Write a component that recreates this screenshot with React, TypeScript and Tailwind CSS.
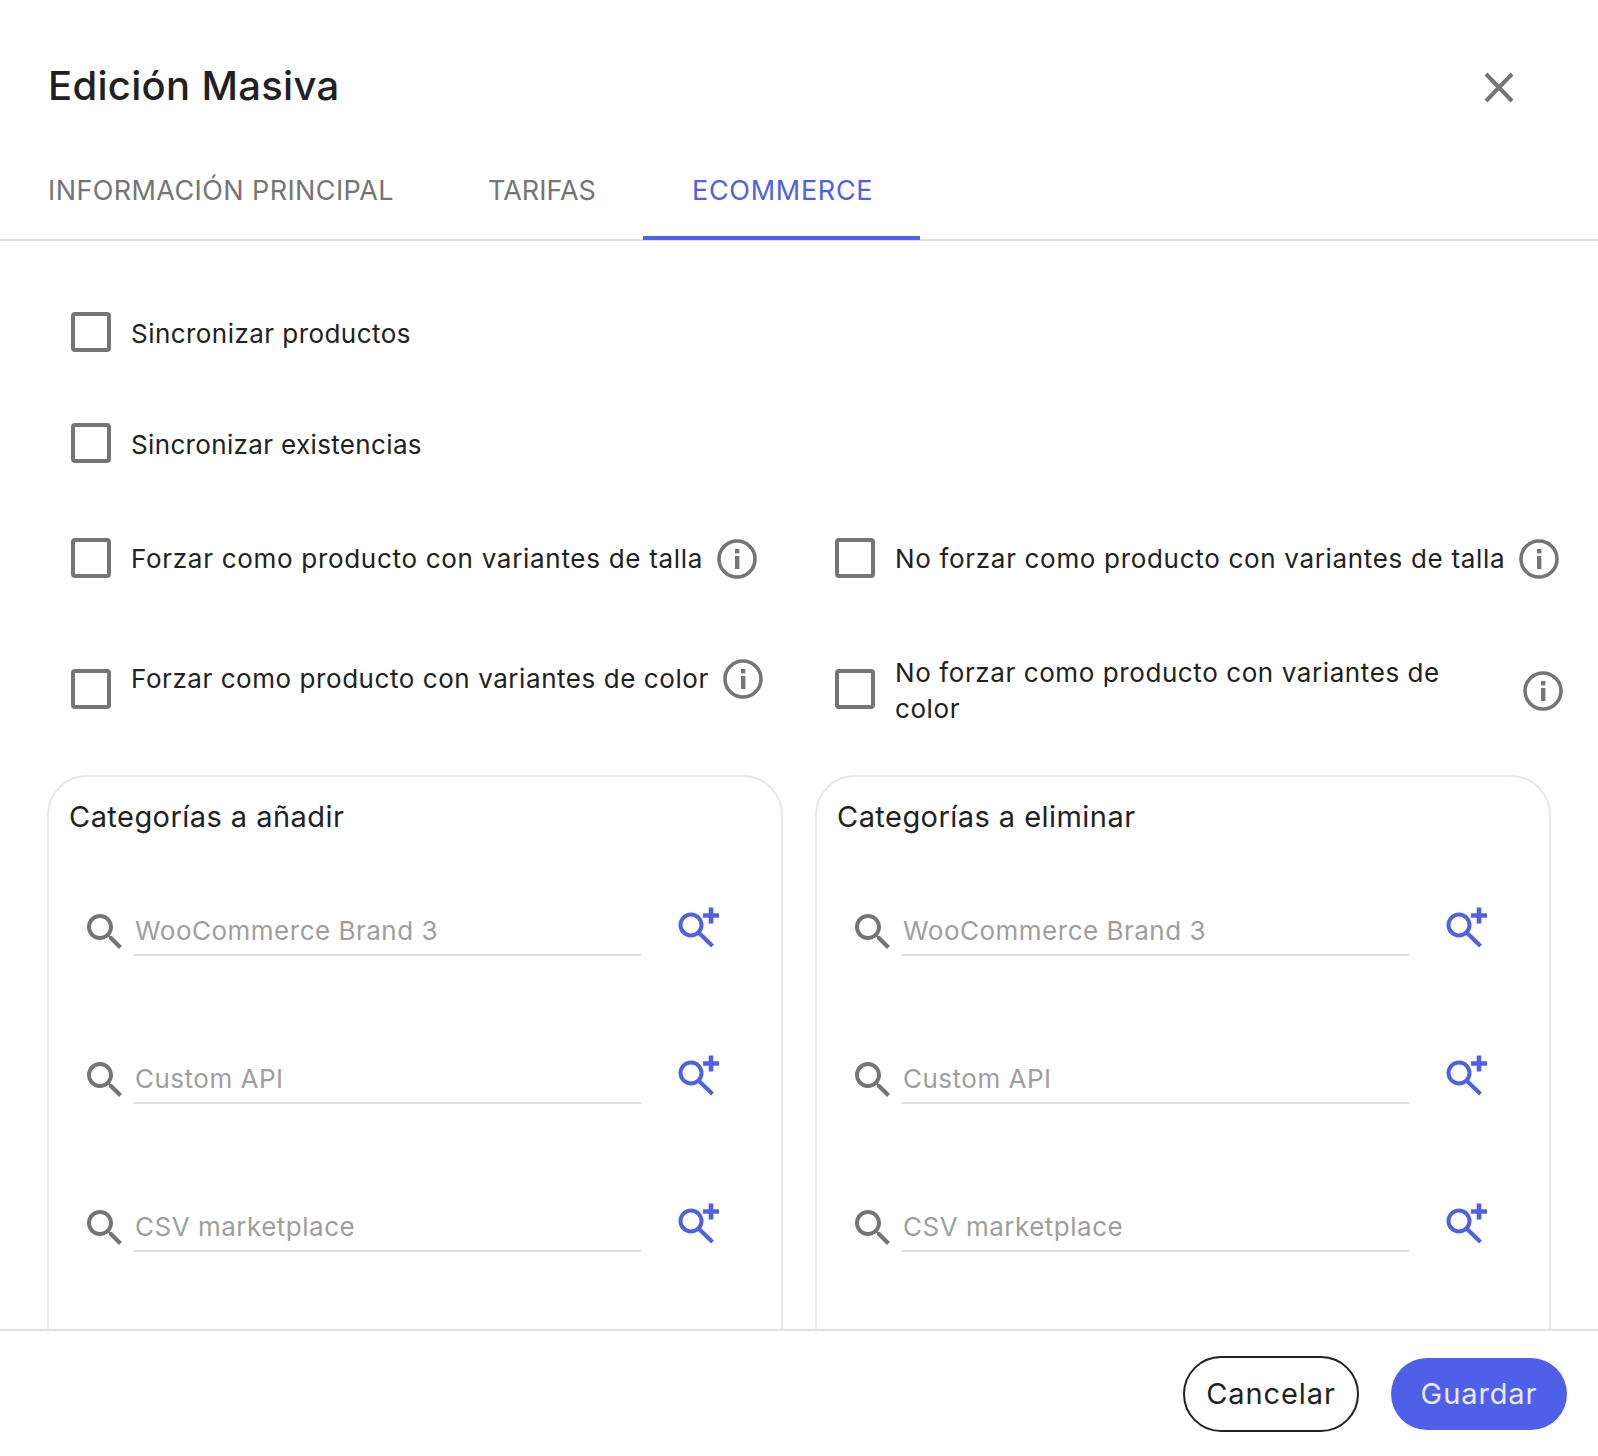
import React from "react";

const font = { fontFamily: '"Inter", "Liberation Sans", sans-serif' };

function Box() {
  return <span className="block w-[40px] h-[40px] shrink-0 rounded-[4px] border-[4px] border-[#757575] bg-white" />;
}

function Info() {
  return (
    <svg width="40" height="40" viewBox="0 0 40 40" className="shrink-0" fill="none">
      <circle cx="20" cy="20" r="18" stroke="#757575" strokeWidth="3.6" />
      <rect x="18" y="10" width="4.4" height="4.4" fill="#757575" />
      <rect x="18" y="17" width="4.4" height="13" fill="#757575" />
    </svg>
  );
}

function SearchIcon() {
  return (
    <svg width="48" height="48" viewBox="0 0 24 24" fill="#757575" className="shrink-0">
      <path d="M15.5 14h-.79l-.28-.27C15.41 12.59 16 11.11 16 9.5 16 5.91 13.09 3 9.5 3S3 5.91 3 9.5 5.91 16 9.5 16c1.61 0 3.09-.59 4.23-1.57l.27.28v.79l5 4.99L20.49 19l-4.99-5zm-6 0C7.01 14 5 11.99 5 9.5S7.01 5 9.5 5 14 7.01 14 9.5 11.99 14 9.5 14z" />
    </svg>
  );
}

function SearchPlus() {
  return (
    <svg width="44" height="44" viewBox="0 0 44 44" fill="none" stroke="#4f60e8" className="shrink-0">
      <circle cx="14" cy="19" r="10.5" strokeWidth="4" />
      <path d="M22 27 L35.5 40" strokeWidth="4" />
      <path d="M34 1.5 V17.5 M26 9.5 H42" strokeWidth="4.6" />
    </svg>
  );
}

function Field({ label }: { label: string }) {
  return (
    <div className="flex items-center h-[60px] mb-[88px]">
      <div className="ml-[14px] w-[48px] h-[48px] mr-[4px] mt-[10px]">
        <SearchIcon />
      </div>
      <div className="w-[508px] h-[50px] border-b-2 border-[#e0e0e0] pl-[2px] pt-[2px] flex items-center mt-[8px]">
        <span className="text-[26px] leading-[36px] text-[#9e9e9e] tracking-[0.5px]">{label}</span>
      </div>
      <div className="ml-[36px] mt-[2px]">
        <SearchPlus />
      </div>
    </div>
  );
}

function Card({ title }: { title: string }) {
  return (
    <div className="w-[736px] h-[600px] shrink-0 border-2 border-[#e8e8e8] rounded-[40px] px-[20px] pt-[22px]">
      <div className="text-[29px] leading-[36px] text-[#212121] tracking-[0.45px] h-[86px]">{title}</div>
      <div className="-ml-[2px] pt-[12px]">
        <Field label="WooCommerce Brand 3" />
        <Field label="Custom API" />
        <Field label="CSV marketplace" />
      </div>
    </div>
  );
}

export default function App() {
  const label = "text-[26px] leading-[36px] text-[#212121]";
  return (
    <div style={font} className="w-[1598px] h-[1456px] bg-white flex flex-col overflow-hidden">
      <header className="h-[141px] shrink-0 flex items-center justify-between pl-[48px] pr-[84px] pt-[34px]">
        <h1 className="text-[40px] leading-[48px] font-medium text-[#212121] tracking-[0.3px] -mt-[4px]">Edición Masiva</h1>
        <svg width="32" height="32" viewBox="0 0 32 32" fill="none" stroke="#757575" strokeWidth="4" className="ml-auto -mr-[1px]">
          <path d="M3 2 L29 29 M29 2 L3 29" />
        </svg>
      </header>

      <nav className="h-[100px] shrink-0 flex border-b-2 border-[#e0e0e0]">
        <div className="pl-[48px] pr-[48px] pt-[3px] w-[441px] flex items-center text-[27px] tracking-[0.4px] text-[#757575] whitespace-nowrap">INFORMACIÓN PRINCIPAL</div>
        <div className="w-[202px] pl-[47px] pt-[3px] flex items-center text-[27px] text-[#757575]">TARIFAS</div>
        <div className="w-[277px] pl-[49px] pt-[6px] flex items-center text-[27px] tracking-[0.7px] text-[#4f60e8] border-b-[4px] border-[#4f60e8] h-[99px]">ECOMMERCE</div>
      </nav>

      <main className="flex-1 min-h-0 overflow-hidden">
        <div className="pl-[71px] pt-[36px]">
          <div className="h-[110px] flex items-center gap-[20px]">
            <Box />
            <span className={`${label} tracking-[0.45px] mt-[3px]`}>Sincronizar productos</span>
          </div>
          <div className="h-[112px] flex items-center gap-[20px]">
            <Box />
            <span className={`${label} tracking-[0.35px] mt-[3px]`}>Sincronizar existencias</span>
          </div>
          <div className="h-[118px] flex items-center">
            <div className="w-[764px] flex items-center gap-[20px]">
              <Box />
              <div className="flex items-center gap-[14px] mt-[2px]">
                <span className={`${label} tracking-[0.7px]`}>Forzar como producto con variantes de talla</span>
                <Info />
              </div>
            </div>
            <div className="flex items-center gap-[20px]">
              <Box />
              <div className="flex items-center gap-[14px] mt-[2px]">
                <span className={`${label} tracking-[0.68px]`}>No forzar como producto con variantes de talla</span>
                <Info />
              </div>
            </div>
          </div>
          <div className="h-[148px] flex items-center pb-[4px]">
            <div className="w-[764px] flex items-center gap-[20px]">
              <Box />
              <div className="flex items-center gap-[14px] mb-[20px]">
                <span className={`${label} tracking-[0.56px]`}>Forzar como producto con variantes de color</span>
                <Info />
              </div>
            </div>
            <div className="flex items-center gap-[20px]">
              <Box />
              <div className="w-[668px] flex items-center justify-between mt-[3px]">
                <div className="w-[560px]">
                  <span className={`${label} tracking-[0.59px]`}>No forzar como producto con variantes de color</span>
                </div>
                <Info />
              </div>
            </div>
          </div>
        </div>
        <div className="flex gap-[32px] pl-[47px] mt-[10px]">
          <Card title="Categorías a añadir" />
          <Card title="Categorías a eliminar" />
        </div>
      </main>

      <footer className="h-[127px] shrink-0 border-t-2 border-[#e0e0e0] flex items-start justify-end gap-[32px] pr-[31px] pt-[25px] bg-white">
        <button className="w-[176px] h-[76px] rounded-full border-2 border-[#212121] text-[29px] text-[#212121] tracking-[0.9px] bg-white">Cancelar</button>
        <button className="w-[176px] h-[72px] mt-[2px] rounded-full bg-[#4f60e8] text-[29px] text-[#e8eafc] tracking-[0.9px]">Guardar</button>
      </footer>
    </div>
  );
}
